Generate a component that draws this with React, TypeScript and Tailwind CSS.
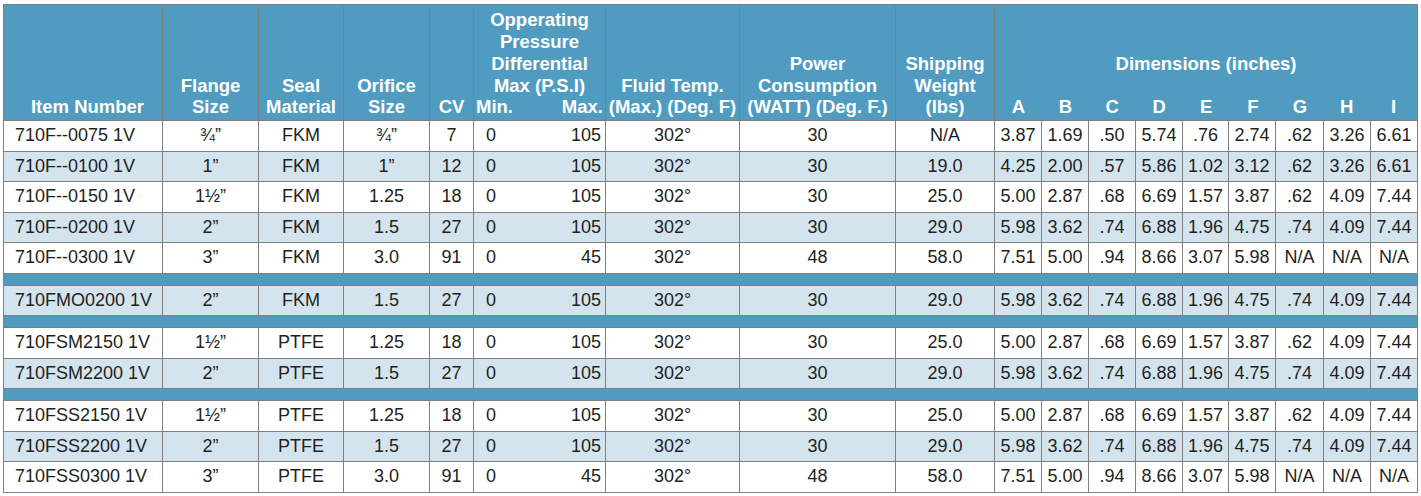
import { JSX } from "react";

type Row = {
  item: string;
  flange: string;
  seal: string;
  orifice: string;
  cv: string;
  min: string;
  max: string;
  temp: string;
  power: string;
  weight: string;
  dims: string[];
  shaded: boolean;
};

const DIMS_0075 = ["3.87", "1.69", ".50", "5.74", ".76", "2.74", ".62", "3.26", "6.61"];
const DIMS_0100 = ["4.25", "2.00", ".57", "5.86", "1.02", "3.12", ".62", "3.26", "6.61"];
const DIMS_150 = ["5.00", "2.87", ".68", "6.69", "1.57", "3.87", ".62", "4.09", "7.44"];
const DIMS_200 = ["5.98", "3.62", ".74", "6.88", "1.96", "4.75", ".74", "4.09", "7.44"];
const DIMS_300 = ["7.51", "5.00", ".94", "8.66", "3.07", "5.98", "N/A", "N/A", "N/A"];

// groups of rows, a blue band sits between each group
const groups: Row[][] = [
  [
    { item: "710F--0075 1V", flange: "¾”", seal: "FKM", orifice: "¾”", cv: "7", min: "0", max: "105", temp: "302°", power: "30", weight: "N/A", dims: DIMS_0075, shaded: false },
    { item: "710F--0100 1V", flange: "1”", seal: "FKM", orifice: "1”", cv: "12", min: "0", max: "105", temp: "302°", power: "30", weight: "19.0", dims: DIMS_0100, shaded: true },
    { item: "710F--0150 1V", flange: "1½”", seal: "FKM", orifice: "1.25", cv: "18", min: "0", max: "105", temp: "302°", power: "30", weight: "25.0", dims: DIMS_150, shaded: false },
    { item: "710F--0200 1V", flange: "2”", seal: "FKM", orifice: "1.5", cv: "27", min: "0", max: "105", temp: "302°", power: "30", weight: "29.0", dims: DIMS_200, shaded: true },
    { item: "710F--0300 1V", flange: "3”", seal: "FKM", orifice: "3.0", cv: "91", min: "0", max: "45", temp: "302°", power: "48", weight: "58.0", dims: DIMS_300, shaded: false },
  ],
  [
    { item: "710FMO0200 1V", flange: "2”", seal: "FKM", orifice: "1.5", cv: "27", min: "0", max: "105", temp: "302°", power: "30", weight: "29.0", dims: DIMS_200, shaded: true },
  ],
  [
    { item: "710FSM2150 1V", flange: "1½”", seal: "PTFE", orifice: "1.25", cv: "18", min: "0", max: "105", temp: "302°", power: "30", weight: "25.0", dims: DIMS_150, shaded: false },
    { item: "710FSM2200 1V", flange: "2”", seal: "PTFE", orifice: "1.5", cv: "27", min: "0", max: "105", temp: "302°", power: "30", weight: "29.0", dims: DIMS_200, shaded: true },
  ],
  [
    { item: "710FSS2150 1V", flange: "1½”", seal: "PTFE", orifice: "1.25", cv: "18", min: "0", max: "105", temp: "302°", power: "30", weight: "25.0", dims: DIMS_150, shaded: false },
    { item: "710FSS2200 1V", flange: "2”", seal: "PTFE", orifice: "1.5", cv: "27", min: "0", max: "105", temp: "302°", power: "30", weight: "29.0", dims: DIMS_200, shaded: true },
    { item: "710FSS0300 1V", flange: "3”", seal: "PTFE", orifice: "3.0", cv: "91", min: "0", max: "45", temp: "302°", power: "48", weight: "58.0", dims: DIMS_300, shaded: false },
  ],
];

const colWidths = [159, 96, 85, 86, 44, 132, 134, 156, 99, 47, 47, 47, 47, 46, 47, 48, 47, 47];
const letters = ["A", "B", "C", "D", "E", "F", "G", "H", "I"];

const th = "border border-[#808080] px-0 pb-[2px] align-bottom text-center font-bold text-white whitespace-nowrap";
const td = "border border-[#808080] h-[30.5px] p-0 text-center";

function DataRow({ row }: { row: Row }): JSX.Element {
  return (
    <tr className={row.shaded ? "bg-[#d4e4ef]" : "bg-white"}>
      <td className={`${td} text-left pl-[11px]`}>{row.item}</td>
      <td className={td}>{row.flange}</td>
      <td className={td}>{row.seal}</td>
      <td className={td}>{row.orifice}</td>
      <td className={td}>{row.cv}</td>
      <td className={td}>
        <div className="flex justify-between pl-[12px] pr-[4px]">
          <span>{row.min}</span>
          <span>{row.max}</span>
        </div>
      </td>
      <td className={td}>{row.temp}</td>
      <td className={td}>{row.power}</td>
      <td className={td}>{row.weight}</td>
      {row.dims.map((d, i) => (
        <td key={i} className={td}>
          {d}
        </td>
      ))}
    </tr>
  );
}

export default function App(): JSX.Element {
  return (
    <div className="bg-white w-[1421px] h-[496px] pt-[4px] pl-[3px] font-['Liberation_Sans',Arial,sans-serif] text-[#231f20]">
      <table className="table-fixed border-collapse w-[1414px] text-[18px] leading-[21px]">
        <colgroup>
          {colWidths.map((w, i) => (
            <col key={i} style={{ width: w }} />
          ))}
        </colgroup>
        <thead className="bg-[#509bc0] text-[18.5px] leading-[21.7px]">
          <tr className="h-[116px]">
            <th className={`${th} pl-[9px]`}>Item Number</th>
            <th className={th}>
              Flange
              <br />
              Size
            </th>
            <th className={th}>
              Seal
              <br />
              Material
            </th>
            <th className={th}>
              Orifice
              <br />
              Size
            </th>
            <th className={th}>CV</th>
            <th className={th}>
              Opperating
              <br />
              Pressure
              <br />
              Differential
              <br />
              Max (P.S.I)
              <div className="flex justify-between pl-[2px] pr-[2px]">
                <span>Min.</span>
                <span>Max.</span>
              </div>
            </th>
            <th className={th}>
              Fluid Temp.
              <br />
              (Max.) (Deg. F)
            </th>
            <th className={th}>
              Power
              <br />
              Consumption
              <br />
              (WATT) (Deg. F.)
            </th>
            <th className={th}>
              Shipping
              <br />
              Weight
              <br />
              (lbs)
            </th>
            <th colSpan={9} className={th}>
              <div className="mb-[21.7px]">Dimensions (inches)</div>
              <div className="grid grid-cols-9">
                {letters.map((l) => (
                  <span key={l}>{l}</span>
                ))}
              </div>
            </th>
          </tr>
        </thead>
        <tbody>
          {groups.map((group, gi) => (
            <>
              {gi > 0 && (
                <tr key={`band-${gi}`} className="bg-[#509bc0]">
                  <td colSpan={18} className="border border-[#808080] h-[12px] p-0"></td>
                </tr>
              )}
              {group.map((row) => (
                <DataRow key={row.item} row={row} />
              ))}
            </>
          ))}
        </tbody>
      </table>
    </div>
  );
}
